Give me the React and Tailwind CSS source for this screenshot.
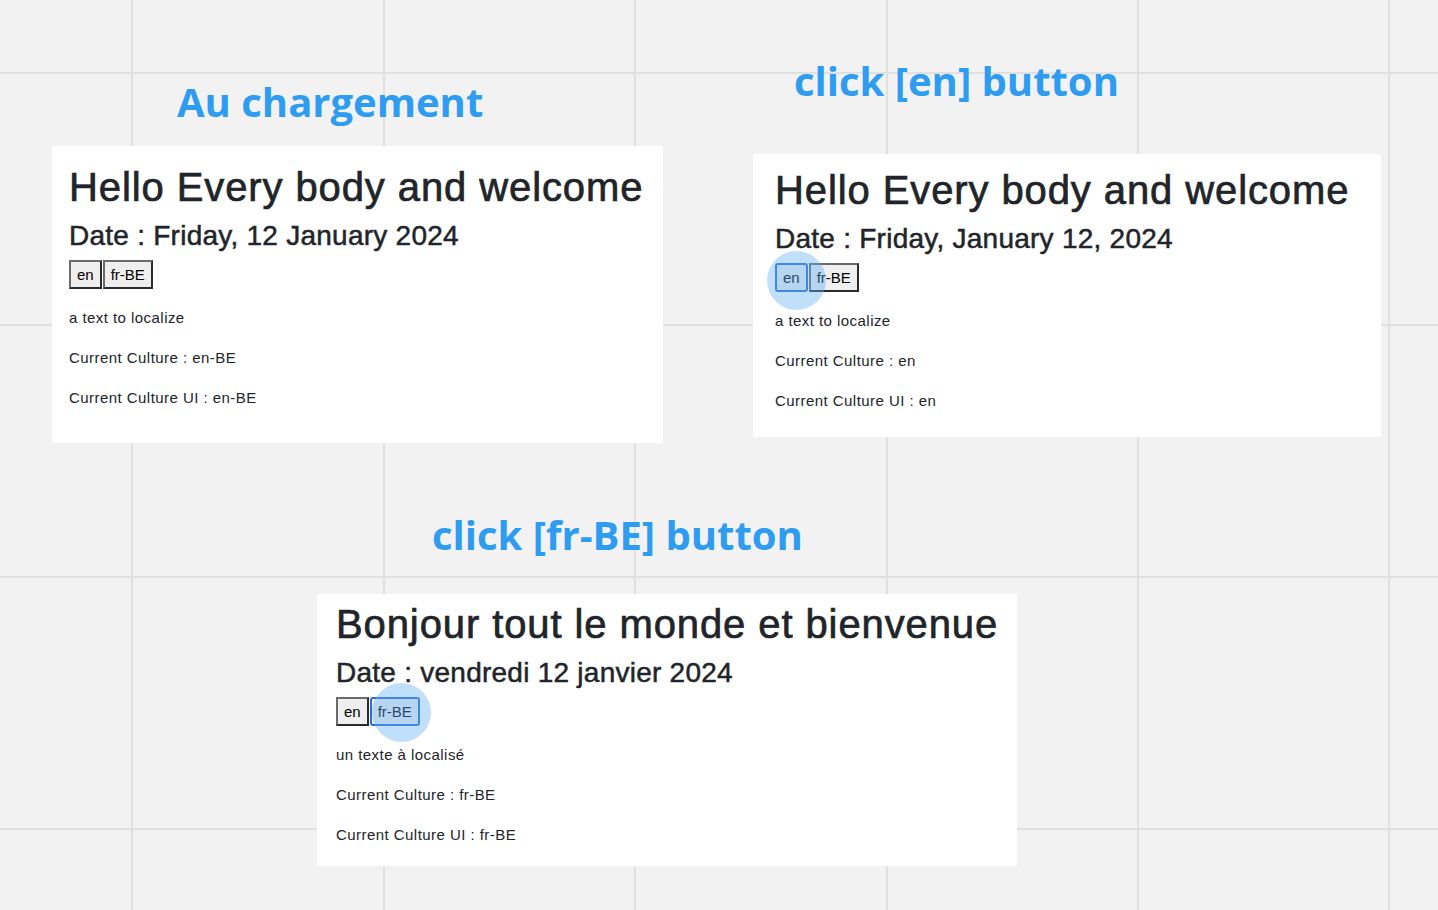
const font = { fontFamily: '"Liberation Sans", Arial, sans-serif' };

const GridLines = () => {
  const xs = [132, 384, 635, 887, 1138, 1389];
  const ys = [73, 325, 577, 829];
  return (
    <svg className="absolute inset-0" width="1438" height="910" aria-hidden="true">
      {xs.map((x) => (
        <line key={'x' + x} x1={x} y1="0" x2={x} y2="910" stroke="#e0e0e0" strokeWidth="2" />
      ))}
      {ys.map((y) => (
        <line key={'y' + y} x1="0" y1={y} x2="1438" y2={y} stroke="#e0e0e0" strokeWidth="2" />
      ))}
    </svg>
  );
};

const Label = ({ children, className }) => (
  <div
    className={`absolute whitespace-nowrap text-[40px] leading-none font-bold text-[#2e9cf0] ${className}`}
    style={{ fontFamily: '"Open Sans", sans-serif' }}
  >
    {children}
  </div>
);

const LangButton = ({ children, focused }) => (
  <button
    className={`h-[29px] px-[6px] text-[15px] leading-none text-black bg-[#efefef] border-2 border-solid ${
      focused ? 'border-[#2a6fd8] rounded-[3px]' : 'border-t-[#6b6b6b] border-l-[#6b6b6b] border-b-[#2b2b2b] border-r-[#2b2b2b]'
    }`}
    style={font}
  >
    {children}
  </button>
);

const Card = ({ className, title, date, text, culture, focused, ring }) => (
  <div className={`absolute bg-white text-[#212529] ${className}`} style={font}>
    <h1 className="text-[40px] leading-[48px] tracking-[0.9px] whitespace-nowrap mb-2 [-webkit-text-stroke:0.7px_#212529]">
      {title}
    </h1>
    <h3 className="text-[28px] leading-[34px] tracking-[0.25px] whitespace-nowrap mb-[7px] [-webkit-text-stroke:0.5px_#212529]">
      Date : {date}
    </h3>
    <div className="relative flex gap-px">
      <LangButton focused={focused === 'en'}>en</LangButton>
      <LangButton focused={focused === 'fr'}>fr-BE</LangButton>
      {ring && (
        <div className={`absolute w-[59px] h-[59px] rounded-full bg-[#62b0f5]/40 pointer-events-none ${ring}`} />
      )}
    </div>
    <div className="mt-[17px] text-[15px] leading-[24px] tracking-[0.45px]">
      <p className="mb-4">{text}</p>
      <p className="mb-4">Current Culture : {culture}</p>
      <p>Current Culture UI : {culture}</p>
    </div>
  </div>
);

export default function App() {
  return (
    <div className="relative w-[1438px] h-[910px] overflow-hidden bg-[#f2f2f2]">
      <GridLines />

      <Label className="left-[177px] top-[82px]">Au chargement</Label>
      <Label className="left-[794px] top-[61px]">click [en] button</Label>
      <Label className="left-[432px] top-[515px]">click [fr-BE] button</Label>

      <Card
        className="left-[52px] top-[146px] w-[611px] h-[297px] pt-[17px] pl-[17px]"
        title="Hello Every body and welcome"
        date="Friday, 12 January 2024"
        text="a text to localize"
        culture="en-BE"
      />
      <Card
        className="left-[753px] top-[154px] w-[628px] h-[283px] pt-[12px] pl-[22px]"
        title="Hello Every body and welcome"
        date="Friday, January 12, 2024"
        text="a text to localize"
        culture="en"
        focused="en"
        ring="left-[-8px] top-[-12px]"
      />
      <Card
        className="left-[317px] top-[594px] w-[700px] h-[272px] pt-[6px] pl-[19px]"
        title="Bonjour tout le monde et bienvenue"
        date="vendredi 12 janvier 2024"
        text="un texte à localisé"
        culture="fr-BE"
        focused="fr"
        ring="left-[36px] top-[-14px]"
      />
    </div>
  );
}
